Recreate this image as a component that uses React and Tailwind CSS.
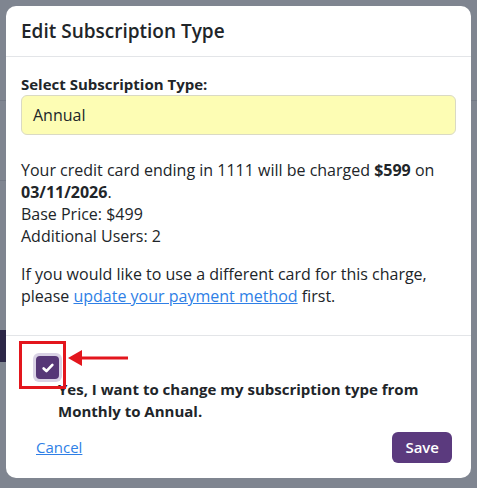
export default function App() {
  return (
    <div
      className="relative h-[488px] w-[477px] overflow-hidden bg-[#7f8590] pt-[6px]"
      style={{ fontFamily: '"Open Sans", "Liberation Sans", sans-serif' }}
    >
      {/* page behind the overlay, only the left edge shows */}
      <div className="absolute left-0 top-[100px] h-px w-full bg-[#737985]" />
      <div className="absolute left-0 top-[180px] h-px w-[6px] bg-[#737985]" />
      <div className="absolute left-0 top-[330px] h-[32px] w-[6px] bg-[#2c2747]" />

      <div className="relative mx-[6px] h-[472px] rounded-[10px] bg-white">
        {/* Header */}
        <div className="flex h-[51px] items-center border-b border-[#e3e5e8] px-[15px]">
          <h2 className="text-[19px] font-semibold text-[#212529]">Edit Subscription Type</h2>
        </div>

        {/* Body */}
        <div className="border-b border-[#e3e5e8] px-[15px] pb-[28px] pt-[16px] text-[#212529]">
          <label className="block text-[15px] font-bold leading-[22px]">Select Subscription Type:</label>
          <div className="flex h-[40px] items-center rounded-[6px] border border-[#dadac4] bg-[#fdfdb4] px-[11px] text-[16px]">
            Annual
          </div>

          <div className="mt-[24px] text-[16px] leading-[22px]">
            <p>
              Your credit card ending in 1111 will be charged <strong>$599</strong> on{' '}
              <strong>03/11/2026</strong>.
            </p>
            <p>Base Price: $499</p>
            <p>Additional Users: 2</p>
            <p className="mt-[16px]">
              If you would like to use a different card for this charge, please{' '}
              <a href="#" className="text-[#2f7fe6] underline">
                update your payment method
              </a>{' '}
              first.
            </p>
          </div>
        </div>

        {/* Footer */}
        <div className="px-[15px] pt-[17px]">
          <div className="ml-[12px] flex h-[29px] w-[29px] items-center justify-center rounded-[6px] bg-[#d9d2e5]">
            <div className="flex h-[23px] w-[23px] items-center justify-center rounded-[4px] bg-[#563777]">
              <svg width="14" height="14" viewBox="0 0 16 16" fill="none">
                <path d="M3 8.5l3.2 3L13 4.5" stroke="white" strokeWidth="3" strokeLinecap="round" strokeLinejoin="round" />
              </svg>
            </div>
          </div>
          <p className="mt-[-4px] pl-[37px] text-[15px] font-bold leading-[22px] text-[#212529]">
            Yes, I want to change my subscription type from Monthly to Annual.
          </p>

          <div className="mt-[10px] flex items-center justify-between">
            <a href="#" className="ml-[15px] text-[15px] text-[#2f7fe6] underline">
              Cancel
            </a>
            <button className="mr-[4px] h-[31px] rounded-[6px] bg-[#5b3a7e] px-[13px] text-[15px] font-semibold text-white">
              Save
            </button>
          </div>
        </div>

        {/* annotation */}
        <div className="absolute left-[13px] top-[335px] h-[48px] w-[47px] border-[3px] border-[#e3161d]" />
        <svg className="absolute left-[60px] top-[342px]" width="66" height="20" viewBox="0 0 66 20">
          <path d="M12 10H62" stroke="#e3161d" strokeWidth="3" />
          <path d="M2 10L16 2V18Z" fill="#e3161d" />
        </svg>
      </div>
    </div>
  );
}
